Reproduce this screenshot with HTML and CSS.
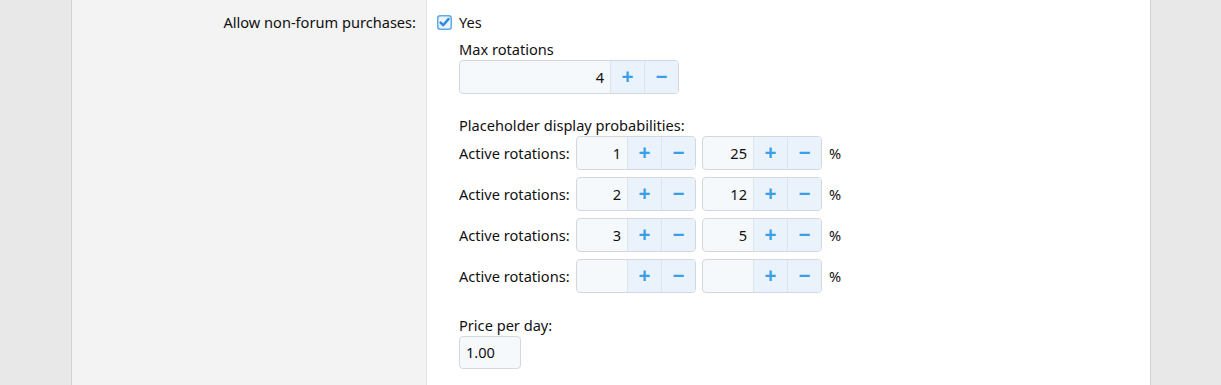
FILE: index.html
```html
<!DOCTYPE html>
<html>
<head>
    <title>Options</title>
    <link rel="stylesheet" href="styles.css">
</head>
<body>
<div class="page">
    <div class="form-row">
        <div class="form-label">Allow non-forum purchases:</div>
        <div class="form-input">
            <label class="check">
                <svg class="check-box" width="15" height="15" viewBox="0 0 15 15">
                    <rect x="0.75" y="0.75" width="13.5" height="13.5" rx="2.5" fill="#eaf4fd" stroke="#5fa9e6" stroke-width="1.5"/>
                    <path d="M3.6 7.6 L6.2 10.2 L11.6 3.9" fill="none" stroke="#2d8ae0" stroke-width="2.4" stroke-linecap="round" stroke-linejoin="round"/>
                </svg>
                <span>Yes</span>
            </label>

            <div class="dependent">
                <div class="sub-label">Max rotations</div>
                <div class="spinner spinner-wide">
                    <span class="spinner-value">4</span>
                    <span class="spinner-btn plus">+</span>
                    <span class="spinner-btn minus">&minus;</span>
                </div>

                <div class="sub-label probs-title">Placeholder display probabilities:</div>
                <div class="prob-list">
                    <div class="prob-row">
                        <span class="prob-label">Active rotations:</span>
                        <div class="spinner"><span class="spinner-value">1</span><span class="spinner-btn plus">+</span><span class="spinner-btn minus">&minus;</span></div>
                        <div class="spinner"><span class="spinner-value">25</span><span class="spinner-btn plus">+</span><span class="spinner-btn minus">&minus;</span></div>
                        <span class="unit">%</span>
                    </div>
                    <div class="prob-row">
                        <span class="prob-label">Active rotations:</span>
                        <div class="spinner"><span class="spinner-value">2</span><span class="spinner-btn plus">+</span><span class="spinner-btn minus">&minus;</span></div>
                        <div class="spinner"><span class="spinner-value">12</span><span class="spinner-btn plus">+</span><span class="spinner-btn minus">&minus;</span></div>
                        <span class="unit">%</span>
                    </div>
                    <div class="prob-row">
                        <span class="prob-label">Active rotations:</span>
                        <div class="spinner"><span class="spinner-value">3</span><span class="spinner-btn plus">+</span><span class="spinner-btn minus">&minus;</span></div>
                        <div class="spinner"><span class="spinner-value">5</span><span class="spinner-btn plus">+</span><span class="spinner-btn minus">&minus;</span></div>
                        <span class="unit">%</span>
                    </div>
                    <div class="prob-row">
                        <span class="prob-label">Active rotations:</span>
                        <div class="spinner"><span class="spinner-value"></span><span class="spinner-btn plus">+</span><span class="spinner-btn minus">&minus;</span></div>
                        <div class="spinner"><span class="spinner-value"></span><span class="spinner-btn plus">+</span><span class="spinner-btn minus">&minus;</span></div>
                        <span class="unit">%</span>
                    </div>
                </div>

                <div class="sub-label price-title">Price per day:</div>
                <div class="text-box">1.00</div>
            </div>
        </div>
    </div>
</div>
</body>
</html>
```

FILE: styles.css
```css
:root {
    --outer-bg: #e8e8e8;
    --label-bg: #f3f3f3;
    --text-color: #111;
    --border-color: #d3d8de;
    --input-bg: #f6f9fc;
    --button-bg: #eaf3fb;
    --accent: #3d9ee8;
}

body {
    margin: 0;
    background-color: var(--outer-bg);
    font-family: "Noto Sans", "Open Sans", sans-serif;
    font-size: 14.6px;
    color: var(--text-color);
}

.page {
    margin: 0 70px 0 71px;
    border-left: 1px solid #d2d2d2;
    border-right: 1px solid #d2d2d2;
    background-color: #fff;
    min-height: 385px;
}

.form-row {
    display: flex;
    min-height: 385px;
}

.form-label {
    width: 344px;
    flex-shrink: 0;
    background-color: var(--label-bg);
    border-right: 1px solid #e3e3e3;
    text-align: right;
    padding: 13px 10px 0 0;
    line-height: 18px;
}

.form-input {
    flex-grow: 1;
    padding: 13px 0 0 10px;
}

.check {
    display: flex;
    align-items: center;
    gap: 7px;
    line-height: 18px;
}

.check-box {
    display: block;
}

.dependent {
    padding: 9px 0 0 22px;
}

.sub-label {
    line-height: 18px;
    margin-bottom: 2px;
}

.probs-title {
    margin-top: 22px;
}

.price-title {
    margin-top: 23px;
}

.spinner {
    display: inline-flex;
    flex-shrink: 0;
    height: 34px;
    box-sizing: border-box;
    border: 1px solid var(--border-color);
    border-radius: 4px;
    background-color: var(--input-bg);
    overflow: hidden;
}

.spinner-value {
    flex: none;
    width: 50px;
    box-sizing: border-box;
    padding-right: 6px;
    text-align: right;
    line-height: 32px;
}

.spinner-wide .spinner-value {
    width: 150px;
}

.spinner-btn {
    flex: none;
    width: 34px;
    box-sizing: border-box;
    border-left: 1px solid #dde4ea;
    background-color: var(--button-bg);
    color: var(--accent);
    font-weight: 700;
    font-size: 21px;
    line-height: 31px;
    text-align: center;
}

.prob-list {
    display: flex;
    flex-direction: column;
    gap: 7px;
}

.prob-row {
    display: flex;
    align-items: center;
    gap: 6px;
}

.prob-label {
    width: 111px;
    white-space: nowrap;
}

.unit {
    margin-left: 1px;
}

.text-box {
    width: 62px;
    height: 33px;
    box-sizing: border-box;
    border: 1px solid var(--border-color);
    border-radius: 4px;
    background-color: var(--input-bg);
    padding-left: 6px;
    line-height: 31px;
}
```
